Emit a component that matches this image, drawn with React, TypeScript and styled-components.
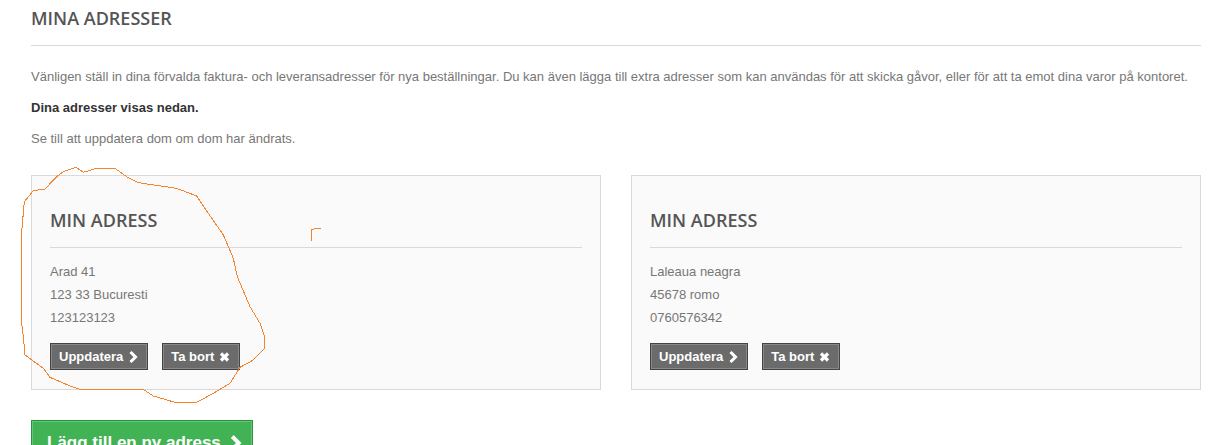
import React from 'react';
import styled, { createGlobalStyle } from 'styled-components';

const GlobalStyle = createGlobalStyle`
  html, body {
    margin: 0;
    height: 445px;
    overflow: hidden;
    background: #fff;
  }
`;

const Page = styled.div`
  width: 1170px;
  margin-left: 31px;
  font-family: 'Liberation Sans', Arial, sans-serif;
  font-size: 13px;
  line-height: 18px;
  color: #777;
`;

const PageTitle = styled.h1`
  margin: 0 0 22px;
  height: 45px;
  padding: 0;
  border-bottom: 1px solid #d9d9d9;
  font-family: 'Open Sans', sans-serif;
  font-size: 18px;
  font-weight: 600;
  line-height: 36px;
  color: #555;
  text-transform: uppercase;
`;

const Paragraph = styled.p<{ $strong?: boolean }>`
  margin: 0 0 13px;
  font-weight: ${(props) => (props.$strong ? 700 : 400)};
  color: ${(props) => (props.$strong ? '#333' : '#777')};
`;

const CardGrid = styled.div`
  display: grid;
  grid-template-columns: 570px 570px;
  column-gap: 30px;
  margin-top: 27px;
`;

const Card = styled.section`
  box-sizing: border-box;
  height: 215px;
  padding: 31px 18px 0;
  background: #fafafa;
  border: 1px solid #d9d9d9;
`;

const CardTitle = styled.h2`
  margin: 0 0 12px;
  padding-bottom: 14px;
  border-bottom: 1px solid #d9d9d9;
  font-family: 'Open Sans', sans-serif;
  font-size: 18px;
  font-weight: 600;
  line-height: 26px;
  color: #555;
  text-transform: uppercase;
`;

const AddressLine = styled.div`
  height: 23px;
  line-height: 23px;
`;

const Actions = styled.div`
  display: flex;
  gap: 14px;
  margin-top: 14px;
`;

const Button = styled.button`
  display: inline-flex;
  align-items: center;
  gap: 5px;
  box-sizing: border-box;
  height: 27px;
  padding: 0 9px 0 8px;
  background: #6b6b6b;
  border: 1px solid #444;
  box-shadow: inset 0 0 0 1px #888;
  font-family: 'Liberation Sans', Arial, sans-serif;
  font-size: 13px;
  font-weight: 700;
  color: #fff;
`;

const AddButton = styled.button`
  display: inline-flex;
  align-items: center;
  gap: 8px;
  box-sizing: border-box;
  width: 222px;
  height: 46px;
  margin-top: 30px;
  padding: 0 0 0 15px;
  background: #42b355;
  border: 1px solid #2f8f42;
  box-shadow: inset 0 0 0 1px #66c476;
  font-family: 'Liberation Sans', Arial, sans-serif;
  font-size: 17px;
  font-weight: 700;
  white-space: nowrap;
  color: #fff;
`;

const Scribble = styled.svg`
  position: absolute;
  top: 0;
  left: 0;
  pointer-events: none;
`;

const Chevron: React.FC<{ width: number; height: number }> = ({ width, height }) => (
  <svg width={width} height={height} viewBox="0 0 10 12" fill="none" stroke="currentColor" strokeWidth="3">
    <path d="M2.5 1 L7.5 6 L2.5 11" />
  </svg>
);

const Cross: React.FC = () => (
  <svg width="11" height="10" viewBox="0 0 11 10" fill="none" stroke="currentColor" strokeWidth="3.2">
    <path d="M2 1.5 L9 8.5 M9 1.5 L2 8.5" />
  </svg>
);

const addresses = [
  { id: 1, lines: ['Arad 41', '123 33 Bucuresti', '123123123'] },
  { id: 2, lines: ['Laleaua neagra', '45678 romo', '0760576342'] },
];

const App: React.FC = () => (
  <>
    <GlobalStyle />
    <Page>
      <PageTitle>Mina adresser</PageTitle>
      <Paragraph>
        Vänligen ställ in dina förvalda faktura- och leveransadresser för nya beställningar. Du kan även lägga till extra adresser som kan användas för att skicka gåvor, eller för att ta emot dina varor på kontoret.
      </Paragraph>
      <Paragraph $strong>Dina adresser visas nedan.</Paragraph>
      <Paragraph>Se till att uppdatera dom om dom har ändrats.</Paragraph>
      <CardGrid>
        {addresses.map((address) => (
          <Card key={address.id}>
            <CardTitle>Min adress</CardTitle>
            {address.lines.map((line) => (
              <AddressLine key={line}>{line}</AddressLine>
            ))}
            <Actions>
              <Button>Uppdatera <Chevron width={10} height={12} /></Button>
              <Button>Ta bort <Cross /></Button>
            </Actions>
          </Card>
        ))}
      </CardGrid>
      <AddButton>Lägg till en ny adress <Chevron width={13} height={16} /></AddButton>
    </Page>
    <Scribble width="1225" height="445" viewBox="0 -480 3675 1335" fill="none" stroke="#f5842c" strokeWidth="3" shapeRendering="crispEdges">
      <polyline points="228,22 250,37 290,25 345,25 380,50 415,68 530,85 590,108 625,160 670,225 700,295 712,350 750,440 780,490 794,530 794,565 760,600 720,622 690,670 640,700 590,727 525,727 460,708 430,688 245,690 215,680 150,652 130,625 75,585 70,530 65,490 65,215 73,125 100,92 135,87 170,50 190,35 228,22" />
      <polyline points="934,243 934,208 962,205" />
    </Scribble>
  </>
);

export default App;
